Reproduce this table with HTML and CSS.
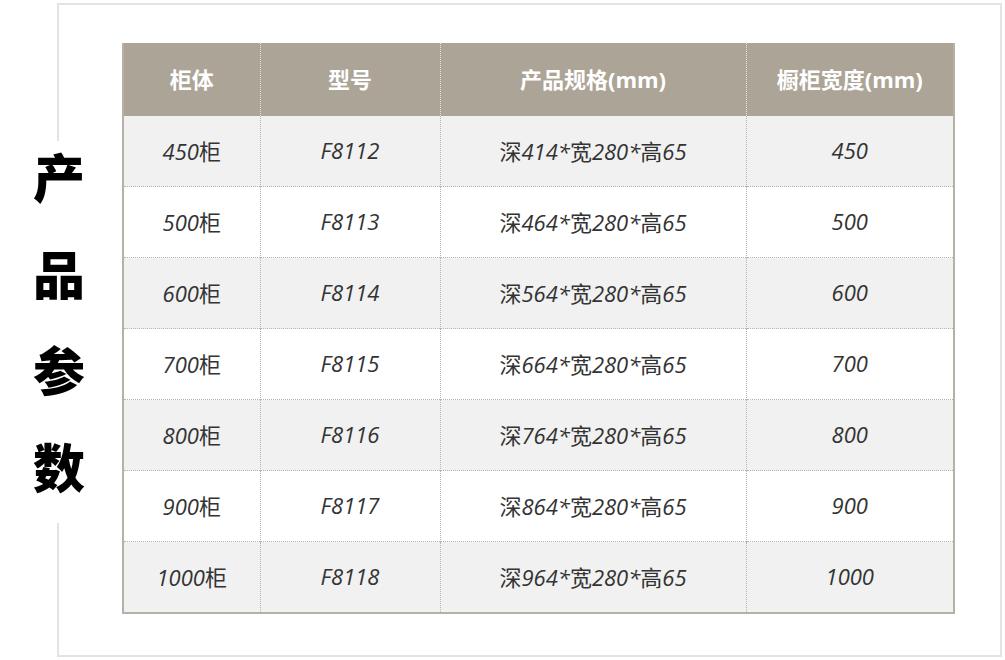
FILE: index.html
```html
<!DOCTYPE html>
<html lang="zh-CN">
<head>
<meta charset="utf-8">
<title>产品参数</title>
<link rel="stylesheet" href="styles.css">
</head>
<body>
<div class="frame">
  <div class="title"><span>产</span><span>品</span><span>参</span><span>数</span></div>
  <table class="spec">
    <colgroup>
      <col class="c1"><col class="c2"><col class="c3"><col class="c4">
    </colgroup>
    <thead>
      <tr><th>柜体</th><th>型号</th><th>产品规格(mm)</th><th>橱柜宽度(mm)</th></tr>
    </thead>
    <tbody>
      <tr><td>450柜</td><td>F8112</td><td>深414*宽280*高65</td><td>450</td></tr>
      <tr><td>500柜</td><td>F8113</td><td>深464*宽280*高65</td><td>500</td></tr>
      <tr><td>600柜</td><td>F8114</td><td>深564*宽280*高65</td><td>600</td></tr>
      <tr><td>700柜</td><td>F8115</td><td>深664*宽280*高65</td><td>700</td></tr>
      <tr><td>800柜</td><td>F8116</td><td>深764*宽280*高65</td><td>800</td></tr>
      <tr><td>900柜</td><td>F8117</td><td>深864*宽280*高65</td><td>900</td></tr>
      <tr><td>1000柜</td><td>F8118</td><td>深964*宽280*高65</td><td>1000</td></tr>
    </tbody>
  </table>
</div>
</body>
</html>
```

FILE: styles.css
```css
html, body {
  margin: 0;
  padding: 0;
  background: #ffffff;
}

body {
  width: 1005px;
  height: 660px;
  overflow: hidden;
  font-family: "Open Sans", "Noto Sans CJK SC", sans-serif;
}

.frame {
  position: relative;
  box-sizing: border-box;
  margin: 3px 0 0 57px;
  width: 945px;
  height: 654px;
  border: 2px solid #e3e3e3;
  padding: 38px 0 0 63px;
}

.title {
  position: absolute;
  left: -36px;
  top: 136px;
  width: 72px;
  height: 382px;
  background: #ffffff;
  display: flex;
  flex-direction: column;
  align-items: center;
  justify-content: space-between;
  padding: 0 0 22px;
  box-sizing: border-box;
  font-family: "Noto Sans CJK SC", sans-serif;
  font-weight: 900;
  font-size: 52px;
  line-height: 70px;
  color: #000000;
}

.spec {
  border-collapse: collapse;
  table-layout: fixed;
  width: 831px;
  border-left: 2px solid #b7b0a5;
  border-right: 2px solid #b7b0a5;
  border-bottom: 2px solid #b7b0a5;
}

.c1 { width: 137px; }
.c2 { width: 180px; }
.c3 { width: 306px; }
.c4 { width: 208px; }

.spec th {
  height: 70px;
  padding: 0 0 3px;
  background: #aca496;
  color: #ffffff;
  font-family: "Open Sans", "Noto Sans CJK SC", sans-serif;
  font-weight: 700;
  font-size: 22px;
  text-align: center;
  border-left: 1px dotted #e8e4de;
}

.spec th:first-child { border-left: none; }

.spec td {
  height: 68px;
  padding: 0 0 2px;
  text-align: center;
  color: #333333;
  font-size: 22px;
  font-style: italic;
  font-synthesis: none;
  border-left: 1px dotted #b4b4b4;
  border-top: 1px dotted #b4b4b4;
}

.spec td:first-child { border-left: none; }
.spec tbody tr:first-child td { border-top: none; }

.spec tbody tr:nth-child(odd) td { background: #f1f1f1; }
.spec tbody tr:nth-child(even) td { background: #ffffff; }
```
